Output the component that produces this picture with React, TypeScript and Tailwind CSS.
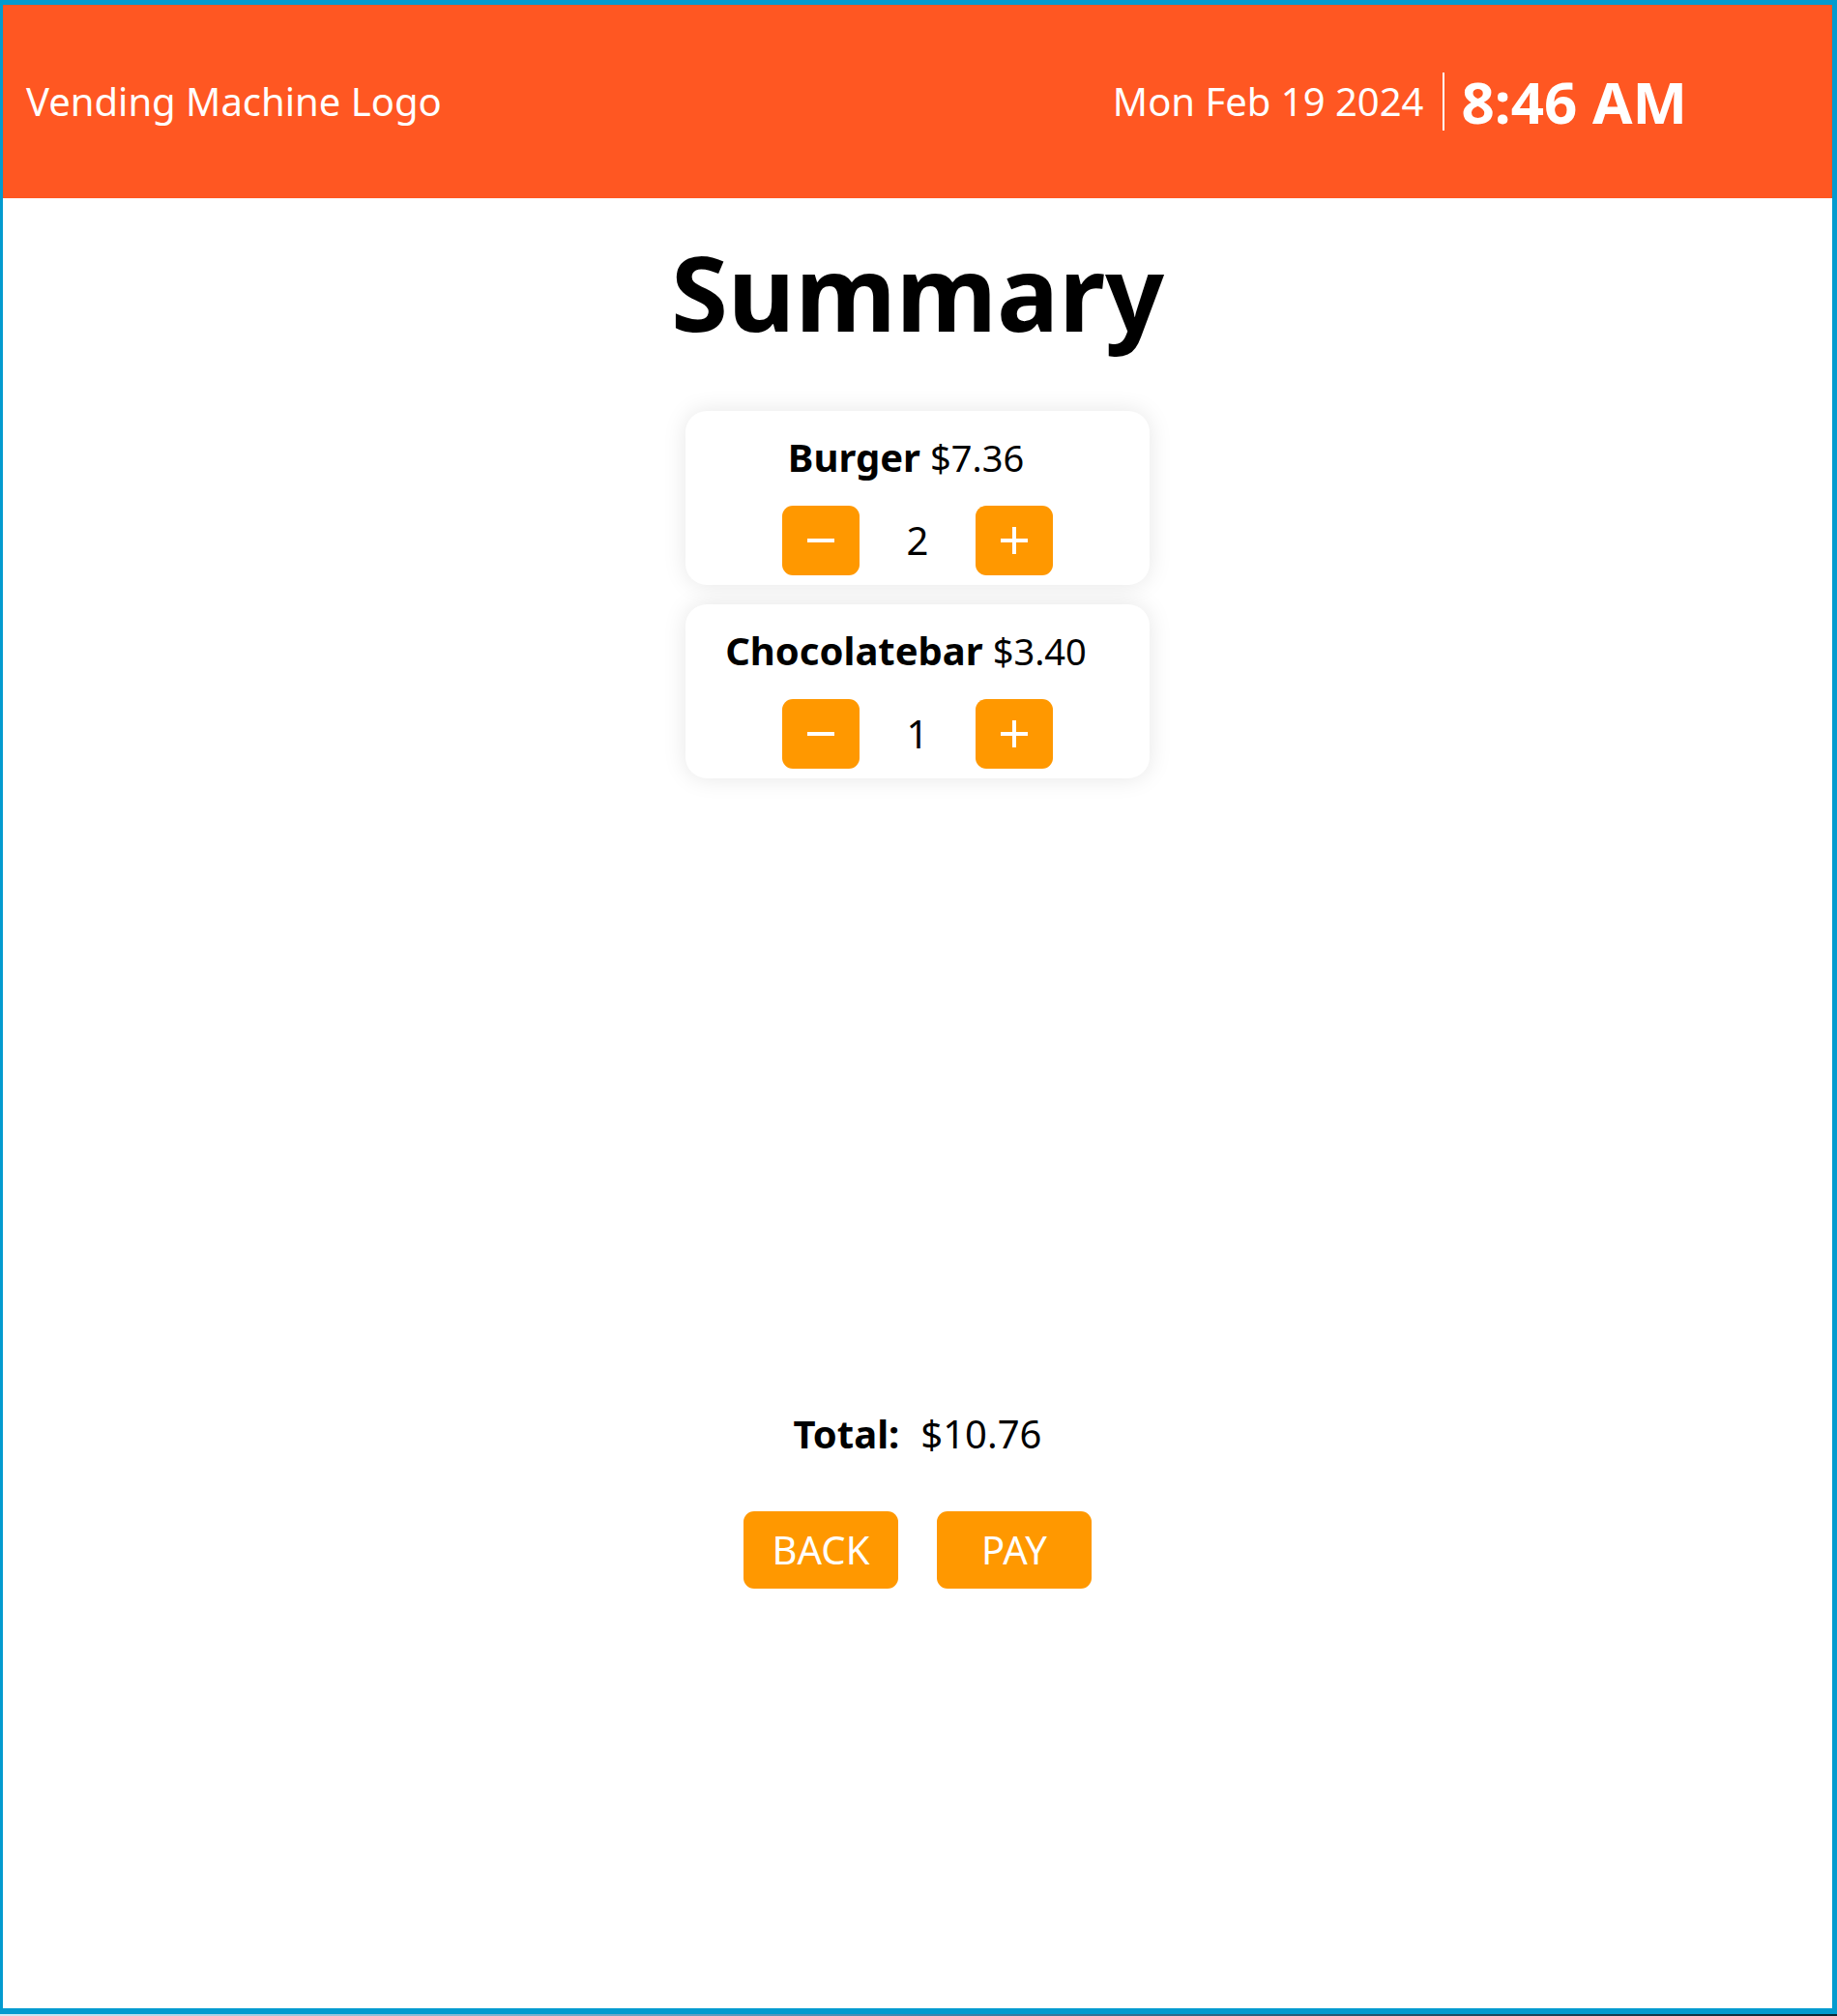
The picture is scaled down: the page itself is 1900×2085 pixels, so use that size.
import { useState } from "react"

type Item = {
  name: string
  price: number
  qty: number
}

const MinusIcon = () => (
  <svg width="28" height="28" viewBox="0 0 28 28">
    <rect x="0" y="12" width="28" height="4" fill="#ffffff" />
  </svg>
)

const PlusIcon = () => (
  <svg width="28" height="28" viewBox="0 0 28 28">
    <rect x="0" y="12" width="28" height="4" fill="#ffffff" />
    <rect x="12" y="0" width="4" height="28" fill="#ffffff" />
  </svg>
)

const ItemCard = ({ item, onChange }: { item: Item; onChange: (qty: number) => void }) => {
  return (
    <div className="w-[480px] h-[180px] rounded-[22px] bg-white shadow-[0_0_24px_rgba(0,0,0,0.1)] flex flex-col items-center pt-[21px]">
      <div className="text-[40px] leading-[54px] text-black flex items-baseline gap-[10px] pr-[24px]">
        <span className="font-bold">{item.name}</span>
        <span className="text-[38px]">${item.price.toFixed(2)}</span>
      </div>
      <div className="flex items-center mt-[23px]">
        <button
          className="w-[80px] h-[72px] rounded-[11px] bg-[#ff9800] flex items-center justify-center"
          onClick={() => onChange(Math.max(0, item.qty - 1))}
        >
          <MinusIcon />
        </button>
        <div className="w-[120px] text-center text-[40px] leading-[54px] text-black">{item.qty}</div>
        <button
          className="w-[80px] h-[72px] rounded-[11px] bg-[#ff9800] flex items-center justify-center"
          onClick={() => onChange(item.qty + 1)}
        >
          <PlusIcon />
        </button>
      </div>
    </div>
  )
}

const App = () => {
  const [items, setItems] = useState<Item[]>([
    { name: "Burger", price: 3.68, qty: 2 },
    { name: "Chocolatebar", price: 3.4, qty: 1 },
  ])

  const total = items.reduce((sum, i) => sum + i.price * i.qty, 0)

  return (
    <div className="w-full h-[2085px] flex flex-col font-['Noto_Sans',sans-serif]">
      <div className="flex-1 flex flex-col bg-white border-[#039bcf] border-t-[5px] border-l-[3px] border-r-[5px] border-b-[6px]">
        <header className="h-[200px] bg-[#ff5722] flex items-center justify-between pl-[24px] pr-[150px] text-white">
          <div className="text-[40px] leading-[54px]">Vending Machine Logo</div>
          <div className="flex items-center">
            <div className="text-[40px] leading-[54px]">Mon Feb 19 2024</div>
            <div className="w-[2px] h-[60px] bg-white ml-[20px] mr-[17px]" />
            <div className="text-[60px] leading-[82px] font-bold">8:46 AM</div>
          </div>
        </header>

        <main className="flex flex-col items-center">
          <h1 className="text-[107px] leading-none font-bold text-black mt-[43px]">Summary</h1>

          <div className="flex flex-col gap-[20px] mt-[70px]">
            {items.map((item, idx) => (
              <ItemCard
                key={item.name}
                item={{ ...item, price: idx === 0 ? item.price * 2 : item.price }}
                onChange={(qty) =>
                  setItems((prev) => prev.map((p, i) => (i === idx ? { ...p, qty } : p)))
                }
              />
            ))}
          </div>

          <div className="mt-[651px] flex items-center text-[40px] leading-[54px] text-black">
            <span className="font-bold">Total:</span>
            <span className="ml-[22px]">${total.toFixed(2)}</span>
          </div>

          <div className="flex gap-[40px] mt-[53px]">
            <button className="w-[160px] h-[80px] rounded-[11px] bg-[#ff9800] text-white text-[40px]">BACK</button>
            <button className="w-[160px] h-[80px] rounded-[11px] bg-[#ff9800] text-white text-[40px]">PAY</button>
          </div>
        </main>
      </div>
      <div className="h-[2px] bg-gradient-to-r from-[#cdebf5] via-[#3f86b0] to-[#0b2733]" />
    </div>
  )
}

export default App
